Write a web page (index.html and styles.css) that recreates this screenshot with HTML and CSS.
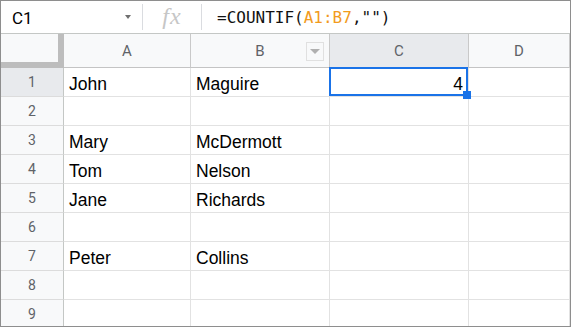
FILE: index.html
```html
<!DOCTYPE html>
<html>
<head>
<meta charset="utf-8">
<link rel="stylesheet" href="styles.css">
</head>
<body>
<div class="frame">
  <div class="fbar">
    <div class="namebox"><span class="ref">C1</span><span class="caret"></span></div>
    <div class="sep"></div>
    <div class="fx">fx</div>
    <div class="sep"></div>
    <div class="formula">=COUNTIF(<span class="rng">A1:B7</span>,"")</div>
  </div>
  <div class="grid">
    <div class="corner"></div>
    <div class="ch">A</div>
    <div class="ch">B<span class="filter"></span></div>
    <div class="ch sel">C</div>
    <div class="ch">D</div>

    <div class="rh sel">1</div>
    <div class="c">John</div>
    <div class="c">Maguire</div>
    <div class="c num active">4<span class="handle"></span></div>
    <div class="c"></div>

    <div class="rh">2</div>
    <div class="c"></div><div class="c"></div><div class="c"></div><div class="c"></div>

    <div class="rh">3</div>
    <div class="c">Mary</div><div class="c">McDermott</div><div class="c"></div><div class="c"></div>

    <div class="rh">4</div>
    <div class="c">Tom</div><div class="c">Nelson</div><div class="c"></div><div class="c"></div>

    <div class="rh">5</div>
    <div class="c">Jane</div><div class="c">Richards</div><div class="c"></div><div class="c"></div>

    <div class="rh">6</div>
    <div class="c"></div><div class="c"></div><div class="c"></div><div class="c"></div>

    <div class="rh">7</div>
    <div class="c">Peter</div><div class="c">Collins</div><div class="c"></div><div class="c"></div>

    <div class="rh">8</div>
    <div class="c"></div><div class="c"></div><div class="c"></div><div class="c"></div>

    <div class="rh">9</div>
    <div class="c"></div><div class="c"></div><div class="c"></div><div class="c"></div>
  </div>
</div>
</body>
</html>
```

FILE: styles.css
```css
* { box-sizing: border-box; }
html, body { margin: 0; padding: 0; background: #fff; }

.frame {
  width: 571px;
  height: 327px;
  border: 1px solid #8e8e8e;
  overflow: hidden;
  background: #fff;
  font-family: "Liberation Sans", Arial, sans-serif;
}

.fbar {
  height: 33px;
  border-bottom: 1px solid #c4c7c5;
  display: flex;
  align-items: center;
}

.namebox {
  width: 141px;
  height: 100%;
  display: flex;
  align-items: center;
  padding: 2px 11px 0 11px;
}
.ref {
  font-family: Roboto, "Liberation Sans", sans-serif;
  font-size: 17px;
  color: #000;
}
.caret {
  margin-left: auto;
  width: 0;
  height: 0;
  border-left: 3.5px solid transparent;
  border-right: 3.5px solid transparent;
  border-top: 4px solid #6f6f6f;
  margin-top: -2px;
}

.sep {
  width: 1px;
  height: 26px;
  background: #dadce0;
}

.fx {
  width: 58px;
  text-align: center;
  font-family: "Liberation Serif", serif;
  font-style: italic;
  font-size: 24px;
  color: #c6c6c6;
  letter-spacing: 1px;
  padding-bottom: 2px;
}

.formula {
  padding-left: 15px;
  font-family: "DejaVu Sans Mono", monospace;
  font-size: 16px;
  color: #111;
  padding-top: 1px;
}
.rng { color: #f29b1d; }

.grid {
  display: grid;
  grid-template-columns: 63px 127px 139px 139px 1fr;
  grid-template-rows: 34px repeat(9, 29px);
}

.corner {
  background: #f8f9fa;
  border-right: 6px solid #bdbdbd;
  border-bottom: 6px solid #bdbdbd;
}

.ch {
  position: relative;
  background: #f8f9fa;
  border-right: 1px solid #c9c9c9;
  border-bottom: 1px solid #c4c4c4;
  display: flex;
  align-items: center;
  justify-content: center;
  font-family: Roboto, "Liberation Sans", sans-serif;
  font-size: 15px;
  color: #5f6368;
}
.ch:last-child { border-right: none; }
.ch.sel { background: #e8eaed; }

.filter {
  position: absolute;
  right: 5px;
  top: 8px;
  width: 18px;
  height: 19px;
  border: 1px solid #e0e0e0;
  background: #f8f9fa;
  display: flex;
  align-items: center;
  justify-content: center;
}
.filter::before {
  content: "";
  width: 0;
  height: 0;
  border-left: 5px solid transparent;
  border-right: 5px solid transparent;
  border-top: 5px solid #b0b0b0;
}

.rh {
  background: #f8f9fa;
  border-right: 1px solid #c4c7c5;
  border-bottom: 1px solid #dcdcdc;
  display: flex;
  align-items: center;
  justify-content: center;
  font-family: Roboto, "Liberation Sans", sans-serif;
  font-size: 14px;
  color: #5f6368;
}
.rh.sel { background: #e8eaed; }

.c {
  position: relative;
  border-right: 1px solid #e2e2e2;
  border-bottom: 1px solid #e2e2e2;
  display: flex;
  align-items: flex-end;
  padding: 0 5px 1px 5px;
  font-size: 17.5px;
  color: #000;
  white-space: nowrap;
}
.c.num { justify-content: flex-end; }

.active::after {
  content: "";
  position: absolute;
  left: -1px;
  top: -1px;
  right: 0;
  bottom: 0;
  border: 2px solid #1a73e8;
}
.handle {
  position: absolute;
  right: -3px;
  bottom: -3px;
  width: 8px;
  height: 8px;
  background: #1a73e8;
  z-index: 2;
}
```
